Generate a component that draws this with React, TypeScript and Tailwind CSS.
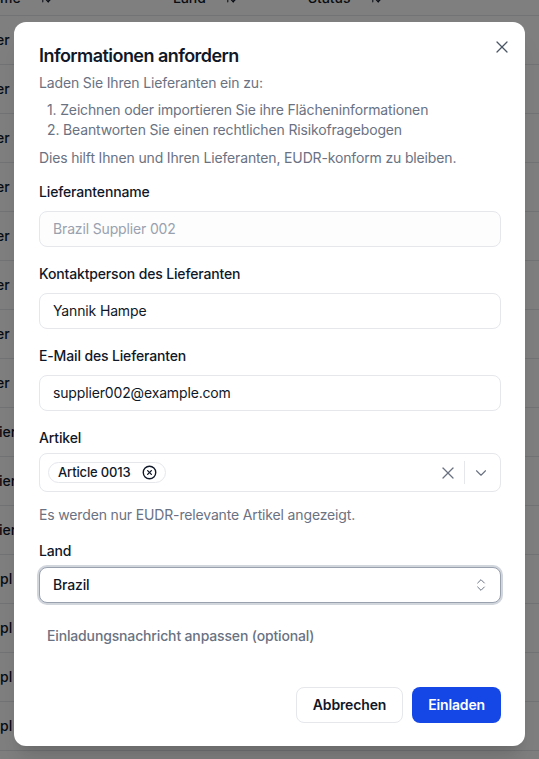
import { X, ChevronDown, ChevronsUpDown, CircleX, ArrowUpDown } from "lucide-react";

function Label({ children, className = "" }: { children: React.ReactNode; className?: string }) {
  return <div className={`text-sm font-medium leading-5 text-gray-900 ${className}`}>{children}</div>;
}

export default function App() {
  const rows: { t: string; cls: string }[] = [
    ...Array(8).fill({ t: "er (BR)", cls: "-ml-[4px]" }),
    ...Array(3).fill({ t: "ier 0", cls: "-ml-[1px]" }),
    ...Array(4).fill({ t: "pl", cls: "ml-0" }),
  ];
  return (
    <div className="relative h-[759px] w-[539px] overflow-hidden bg-white font-['Inter',sans-serif] text-gray-900">
      {/* background table */}
      <div className="-mt-[20px]">
        <div className="flex h-9 items-center border-b border-gray-200 text-sm font-medium text-gray-900">
          <div className="flex w-[173px] items-center">
            <span>me</span>
            <ArrowUpDown size={13} className="ml-[18px]" />
          </div>
          <div className="flex w-[135px] items-center">
            <span>Land</span>
            <ArrowUpDown size={13} className="ml-[18px]" />
          </div>
          <div className="flex items-center">
            <span>Status</span>
            <ArrowUpDown size={13} className="ml-[18px]" />
          </div>
        </div>
        {rows.map((r, i) => (
          <div key={i} className="flex h-[49px] items-center border-b border-gray-200 text-sm font-medium text-gray-900">
            <span className={`whitespace-nowrap ${r.cls}`}>{r.t}</span>
          </div>
        ))}
      </div>

      {/* overlay */}
      <div className="absolute inset-0 bg-black/50" />

      {/* modal */}
      <div className="absolute left-[14px] top-[22px] w-[511px] rounded-xl bg-white pb-[23px] pl-[25px] pr-6 pt-[20px] tracking-[-0.15px] shadow-xl">
        <button className="absolute right-[13px] top-[15px] text-gray-600">
          <X size={20} strokeWidth={1.5} />
        </button>
        <h2 className="text-lg font-semibold leading-7 tracking-[-0.55px] text-gray-900">Informationen anfordern</h2>
        <p className="mt-[3px] text-sm leading-5 text-gray-500">Laden Sie Ihren Lieferanten ein zu:</p>
        <ol className="mt-[7px] pl-2 text-sm leading-5 text-gray-500">
          <li>1. Zeichnen oder importieren Sie ihre Flächeninformationen</li>
          <li>2. Beantworten Sie einen rechtlichen Risikofragebogen</li>
        </ol>
        <p className="mt-2 text-sm leading-5 text-gray-500">
          Dies hilft Ihnen und Ihren Lieferanten, EUDR-konform zu bleiben.
        </p>

        <Label className="mt-[14px]">Lieferantenname</Label>
        <div className="mt-[9px] flex h-9 items-center rounded-lg border border-gray-200 bg-gray-50/40 px-[13px] text-sm text-gray-400">
          Brazil Supplier 002
        </div>

        <Label className="mt-[17px]">Kontaktperson des Lieferanten</Label>
        <div className="mt-[9px] flex h-9 items-center rounded-lg border border-gray-200 bg-white px-[13px] text-sm text-gray-900">
          Yannik Hampe
        </div>

        <Label className="mt-[17px]">E-Mail des Lieferanten</Label>
        <div className="mt-[9px] flex h-9 items-center rounded-lg border border-gray-200 bg-white px-[13px] text-sm text-gray-900">
          supplier002@example.com
        </div>

        <Label className="mt-[17px]">Artikel</Label>
        <div className="mt-[5px] flex h-[39px] items-center rounded-lg border border-gray-200 bg-white pl-2 pr-[10px]">
          <div className="flex flex-1 items-center">
            <span className="flex h-[21px] items-center rounded-full border border-gray-200 bg-white pl-[9px] pr-2 text-[13px] font-medium text-gray-900">
              Article 0013
              <CircleX size={15} strokeWidth={2.2} className="ml-[11px] text-gray-900" />
            </span>
          </div>
          <X size={20} strokeWidth={1.5} className="text-gray-500" />
          <div className="ml-[6px] h-[23px] w-px bg-gray-200" />
          <ChevronDown size={18} strokeWidth={1.5} className="ml-[7px] text-gray-500" />
        </div>
        <p className="mt-[13px] text-sm leading-5 text-gray-500">Es werden nur EUDR-relevante Artikel angezeigt.</p>

        <Label className="mt-4">Land</Label>
        <div className="mt-[6px] flex h-9 items-center rounded-lg border border-gray-400 bg-white pl-[13px] pr-[11px] ring-2 ring-gray-300">
          <span className="flex-1 text-sm font-medium text-gray-900">Brazil</span>
          <ChevronsUpDown size={16} strokeWidth={1.5} className="text-gray-500" />
        </div>

        <button className="mt-[23px] block pl-2 text-sm font-medium leading-5 text-gray-500">
          Einladungsnachricht anpassen (optional)
        </button>

        <div className="mt-[41px] flex justify-end gap-[9px]">
          <button className="h-9 rounded-lg border border-gray-200 bg-white px-4 text-sm font-semibold text-gray-900">
            Abbrechen
          </button>
          <button className="h-9 rounded-lg bg-[#1447e6] px-4 text-sm font-semibold text-white">Einladen</button>
        </div>
      </div>
    </div>
  );
}
